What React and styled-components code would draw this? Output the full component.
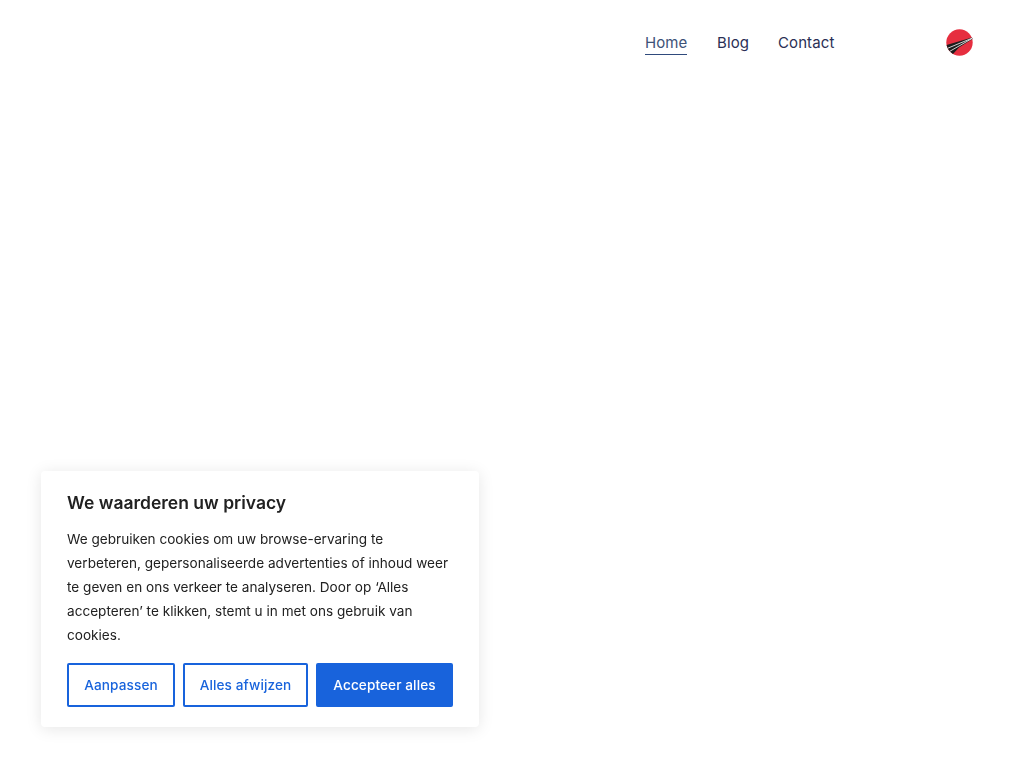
import React from "react";
import styled, { createGlobalStyle } from "styled-components";

const Global = createGlobalStyle`
  html, body { margin: 0; padding: 0; background: #fff; }
  body { font-family: "Inter", "Liberation Sans", sans-serif; }
  * { box-sizing: border-box; }
`;

const Page = styled.div`
  min-height: 768px;
  background: #fff;
`;

const Header = styled.header`
  display: flex;
  align-items: center;
  justify-content: flex-end;
  height: 86px;
  padding-right: 51px;
`;

const Nav = styled.nav`
  display: flex;
  align-items: center;
  gap: 30px;
  margin-right: 111px;
`;

const NavLink = styled.a`
  display: block;
  width: ${(p) => p.$w}px;
  padding-top: 1px;
  font-family: "Inter", "Open Sans", sans-serif;
  font-size: 15px;
  font-weight: 400;
  line-height: 22px;
  letter-spacing: 0.1px;
  white-space: nowrap;
  color: ${(p) => (p.$active ? "#3d5278" : "#2a2f55")};
  border-bottom: 1px solid ${(p) => (p.$active ? "#2f4a7c" : "transparent")};
`;

const Logo = styled.svg`
  display: block;
  width: 27px;
  height: 27px;
  margin-bottom: 2px;
`;

const Consent = styled.section`
  position: fixed;
  left: 41px;
  bottom: 41px;
  width: 438px;
  height: 256px;
  padding: 21px 26px;
  background: #fff;
  border-radius: 4px;
  box-shadow: 0 2px 16px rgba(0, 0, 0, 0.1);
`;

const Title = styled.h2`
  margin: 0 0 13px;
  font-size: 17.5px;
  line-height: 22px;
  font-weight: 630;
  color: #212121;
`;

const Body = styled.p`
  margin: 0 0 16px;
  font-size: 13.6px;
  line-height: 24px;
  color: #212121;
`;

const Actions = styled.div`
  display: flex;
  gap: 8px;
`;

const Button = styled.button`
  width: ${(p) => p.$w}px;
  height: 44px;
  padding: 0;
  font-family: inherit;
  font-size: 13.6px;
  font-weight: 450;
  letter-spacing: 0.1px;
  color: ${(p) => (p.$primary ? "#fff" : "#1863dc")};
  background: ${(p) => (p.$primary ? "#1863dc" : "#fff")};
  border: 2px solid #1863dc;
  border-radius: 2px;
  white-space: nowrap;
`;

export default function App() {
  return (
    <Page>
      <Global />
      <Header>
        <Nav>
          <NavLink $active $w={42}>Home</NavLink>
          <NavLink $w={31}>Blog</NavLink>
          <NavLink $w={57}>Contact</NavLink>
        </Nav>
        <Logo viewBox="0 0 27 27" aria-label="Logo">
          <circle cx="13.5" cy="13.5" r="13.2" fill="#e62e3f" />
          <path d="M0.6 16 L26 8.5 L26.5 10 L13 18.5 L7 25 Q2 22 0.6 16 Z" fill="#1c1c1c" />
          <path d="M1.5 19.3 L26 9.2 M3.8 22.3 L26 9.5" stroke="#fff" strokeWidth="0.8" fill="none" />
        </Logo>
      </Header>
      <Consent>
        <Title>We waarderen uw privacy</Title>
        <Body>
          We gebruiken cookies om uw browse-ervaring te verbeteren, gepersonaliseerde advertenties of inhoud weer te geven en ons verkeer te analyseren. Door op ‘Alles accepteren’ te klikken, stemt u in met ons gebruik van cookies.
        </Body>
        <Actions>
          <Button $w={108}>Aanpassen</Button>
          <Button $w={125}>Alles afwijzen</Button>
          <Button $primary $w={137}>Accepteer alles</Button>
        </Actions>
      </Consent>
    </Page>
  );
}
